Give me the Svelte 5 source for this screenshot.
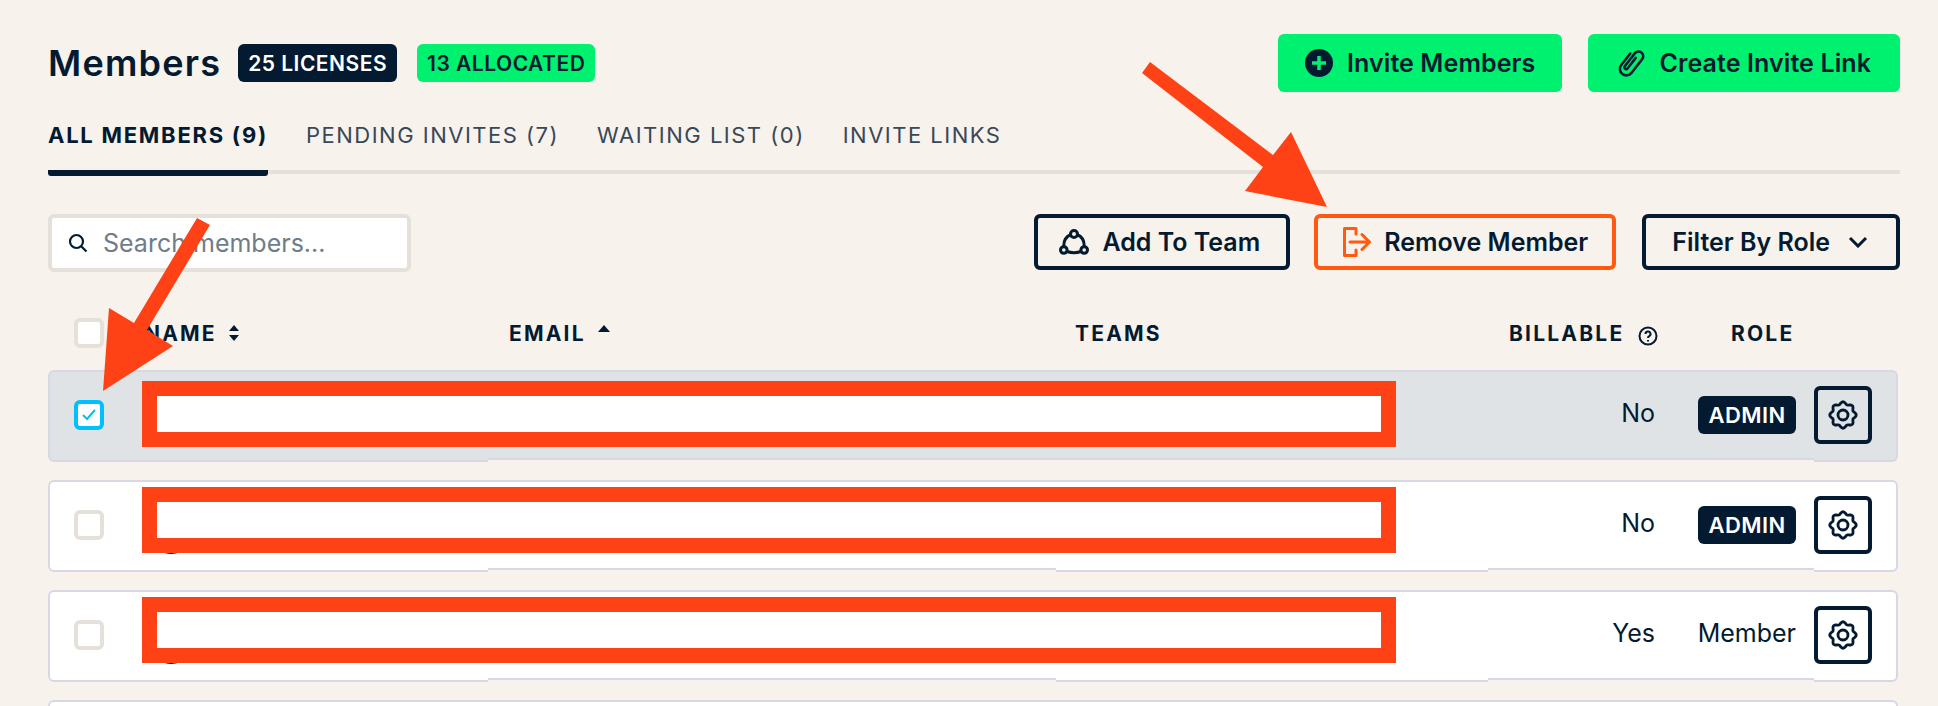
<script>
  const tabs = [
    { label: 'ALL MEMBERS (9)', active: true },
    { label: 'PENDING INVITES (7)' },
    { label: 'WAITING LIST (0)' },
    { label: 'INVITE LINKS' }
  ];

  const members = [
    { billable: 'No', role: 'ADMIN', checked: true },
    { billable: 'No', role: 'ADMIN' },
    { billable: 'Yes', role: 'Member' },
    { billable: '', role: '' }
  ];

  // wavy outline with eight bumps for the settings icon
  function gearPath() {
    const pts = [];
    for (let i = 0; i < 96; i++) {
      const a = (i / 96) * Math.PI * 2;
      const r = 12 + 1.2 * Math.cos(8 * a);
      pts.push(`${(15 + r * Math.cos(a)).toFixed(2)} ${(15 + r * Math.sin(a)).toFixed(2)}`);
    }
    return 'M' + pts.join('L') + 'Z';
  }
  const gear = gearPath();
</script>

<div class="page">
  <header class="top">
    <div class="title-wrap">
      <h1>Members</h1>
      <span class="badge dark">25 LICENSES</span>
      <span class="badge green">13 ALLOCATED</span>
    </div>
    <div class="top-actions">
      <button class="btn-green">
        <svg width="28" height="30" viewBox="0 0 28 30">
          <circle cx="14" cy="15" r="14" fill="#031a30" />
          <path d="M14 8v14M7 15h14" stroke="#00f170" stroke-width="3.5" />
        </svg>
        Invite Members
      </button>
      <button class="btn-green clip">
        <svg width="28" height="30" viewBox="2 3 24 24" fill="none" stroke="#031a30" stroke-width="2.200" stroke-linecap="round" stroke-linejoin="round">
          <g transform="rotate(38 14 15)">
            <path d="M8.500 9v12.500a5.500 5.500 0 0 0 11 0V6.500a4 4 0 0 0-8 0v14a1.500 1.500 0 0 0 3 0V9" />
          </g>
        </svg>
        Create Invite Link
      </button>
    </div>
  </header>

  <nav class="tabs">
    {#each tabs as tab}
      <span class="tab" class:active={tab.active}>{tab.label}</span>
    {/each}
  </nav>

  <div class="toolbar">
    <label class="search">
      <svg width="20" height="20" viewBox="0 0 20 20" fill="none" stroke="#031a30" stroke-width="2.200">
        <circle cx="8.500" cy="8.500" r="6.500" />
        <path d="m13.500 13.500 5 5" />
      </svg>
      <span>Search members...</span>
    </label>
    <div class="tools">
      <button class="btn-line team">
        <svg width="30" height="26" viewBox="0 0 30 26" fill="none" stroke="#031a30" stroke-width="3">
          <path d="M12 5.500C7 7.500 4.500 12 4.800 18M18 5.500c5 2 7.500 6.500 7.200 12.500M8 22.500c4.500 1.500 9.500 1.500 14 0" />
          <circle cx="15" cy="5" r="3.500" />
          <circle cx="4.800" cy="21" r="3.300" />
          <circle cx="25.200" cy="21" r="3.300" />
        </svg>
        Add To Team
      </button>
      <button class="btn-line remove">
        <svg width="28" height="30" viewBox="0 0 28 30" fill="none" stroke="#ff5a10" stroke-width="3" stroke-linejoin="round" stroke-linecap="round">
          <path d="M13 7V1.500H1.500v27H13V23" />
          <path d="M7 15h19M19 7.500l7.500 7.500-7.500 7.500" />
        </svg>
        Remove Member
      </button>
      <button class="btn-line filter">
        Filter By Role
        <svg width="20" height="12" viewBox="0 0 20 12" fill="none" stroke="#031a30" stroke-width="3">
          <path d="m2 2 8 8 8-8" />
        </svg>
      </button>
    </div>
  </div>

  <div class="thead">
    <span class="check"></span>
    <span class="th name">NAME
      <svg width="10" height="16" viewBox="0 0 10 16" fill="#031a30"><path d="M5 0l5 6H0zM5 16 0 10h10z" /></svg>
    </span>
    <span class="th email">EMAIL
      <svg class="caret" width="12" height="7" viewBox="0 0 12 7" fill="#031a30"><path d="M6 0l6 7H0z" /></svg>
    </span>
    <span class="th teams">TEAMS</span>
    <span class="th billable">BILLABLE
      <svg class="help" width="20" height="20" viewBox="0 0 20 20" fill="none" stroke="#031a30" stroke-width="2">
        <circle cx="10" cy="10" r="8.500" />
        <path d="M7.500 8a2.500 2.500 0 1 1 3.700 2.200c-.8.400-1.200.9-1.200 1.800" />
        <path d="M10 14v1.500" />
      </svg>
    </span>
    <span class="th role">ROLE</span>
  </div>

  <div class="rows">
    {#each members as m, i}
      <div class="row" class:selected={m.checked}>
        <div class="cell c-name">
          <span class="check" class:on={m.checked}>
            {#if m.checked}
              <svg width="16" height="14" viewBox="0 0 16 14" fill="none" stroke="#00bfff" stroke-width="2"><path d="m2 7 4 4 8-9" /></svg>
            {/if}
          </span>
          {#if i > 0}<span class="avatar"></span>{/if}
        </div>
        <div class="cell c-email"></div>
        <div class="cell c-teams" class:tall={i > 0}></div>
        <div class="cell c-billable"><span class="val">{m.billable}</span></div>
        <div class="cell c-role">
          {#if m.role === 'ADMIN'}
            <span class="admin">ADMIN</span>
          {:else}
            <span class="val">{m.role}</span>
          {/if}
        </div>
        <div class="cell c-gear">
          <button class="gear" aria-label="Settings">
            <svg width="30" height="30" viewBox="0 0 30 30" fill="none" stroke="#031a30" stroke-width="2.800">
              <path d={gear} />
              <circle cx="15" cy="15" r="5" />
            </svg>
          </button>
        </div>
        <span class="redact"></span>
      </div>
    {/each}
  </div>

  <svg class="arrows" width="1938" height="706" viewBox="0 0 1938 706" fill="#ff4216">
    <polygon points="1150,62 1273,155 1291,132 1327,207 1245,191 1263,167 1142,73" />
    <polygon points="197,218 210,225 147,330 173,346 103,391 109,308 134,323" />
  </svg>
</div>

<style>
  :global(body) {
    margin: 0;
    background: #f7f2eb;
    overflow: hidden;
  }

  .page {
    position: relative;
    width: 1938px;
    height: 706px;
    overflow: hidden;
    box-sizing: border-box;
    padding: 34px 38px 0 48px;
    font-family: Inter, "Noto Sans", sans-serif;
    color: #031a30;
  }

  button {
    font-family: inherit;
    color: inherit;
    cursor: pointer;
  }

  .top {
    display: flex;
    justify-content: space-between;
    height: 58px;
  }

  .title-wrap {
    display: flex;
    align-items: center;
    gap: 20px;
    height: 58px;
  }

  h1 {
    margin: 0 -3px 0 0;
    font-size: 36px;
    font-weight: 600;
    letter-spacing: 1.200px;
  }

  .badge {
    height: 38px;
    box-sizing: border-box;
    padding: 0 10px;
    display: flex;
    align-items: center;
    border-radius: 6px;
    font-size: 21px;
    font-weight: 600;
    letter-spacing: 0.5px;
    white-space: nowrap;
  }

  .dark {
    background: #031a30;
    color: #fff;
  }

  .green {
    background: #00f170;
  }

  .top-actions {
    display: flex;
    gap: 26px;
  }

  .btn-green {
    height: 58px;
    border: 0;
    border-radius: 6px;
    background: #00f170;
    display: flex;
    align-items: center;
    gap: 14px;
    padding: 0 27px;
    font-size: 25px;
    font-weight: 600;
    letter-spacing: 0.1px;
  }

  .btn-green.clip {
    padding: 0 29px;
  }

  .tabs {
    display: flex;
    gap: 38px;
    height: 50px;
    margin-top: 28px;
    border-bottom: 4px solid #e5e0d9;
  }

  .tab {
    font-size: 22px;
    letter-spacing: 1.500px;
    color: #37485a;
    line-height: 30px;
    height: 50px;
    white-space: nowrap;
  }

  .tab.active {
    font-weight: 700;
    letter-spacing: 1.750px;
    color: #031a30;
    border-bottom: 6px solid #031a30;
    border-radius: 0 0 3px 3px;
  }

  .toolbar {
    display: flex;
    justify-content: space-between;
    margin-top: 40px;
  }

  .search {
    width: 363px;
    height: 58px;
    box-sizing: border-box;
    border: 4px solid #e5e0d9;
    border-radius: 6px;
    background: #fff;
    display: flex;
    align-items: center;
    gap: 15px;
    padding-left: 16px;
    font-size: 25px;
    color: #6f7c89;
  }

  .tools {
    display: flex;
    gap: 24px;
  }

  .btn-line {
    height: 56px;
    box-sizing: border-box;
    border: 4px solid #031a30;
    border-radius: 6px;
    background: transparent;
    display: flex;
    align-items: center;
    gap: 13px;
    font-size: 25px;
    font-weight: 600;
    white-space: nowrap;
  }

  .team {
    padding: 0 26px 0 21px;
  }

  .remove {
    border-color: #ff5a10;
    padding: 0 24px 0 25px;
  }

  .filter {
    gap: 18px;
    margin-left: 2px;
    padding: 0 28px 0 26px;
  }

  .check {
    width: 30px;
    height: 30px;
    box-sizing: border-box;
    border: 4px solid #e5e0d9;
    border-radius: 6px;
    background: #fff;
    display: flex;
    align-items: center;
    justify-content: center;
    flex: none;
  }

  .check.on {
    border-color: #00bfff;
  }

  .thead {
    display: grid;
    grid-template-columns: 70px 365px 566px 434px 222px 1fr;
    align-items: center;
    height: 98px;
    padding: 24px 0 0 26px;
    box-sizing: border-box;
  }

  .th {
    font-size: 21px;
    font-weight: 700;
    letter-spacing: 2.200px;
    display: flex;
    align-items: center;
    gap: 12px;
  }

  .caret {
    margin-bottom: 10px;
  }

  .help {
    margin: 5px 0 0 2px;
  }

  .rows {
    display: flex;
    flex-direction: column;
    gap: 18px;
  }

  .row {
    position: relative;
    display: flex;
    align-items: flex-start;
    height: 92px;
    width: 1850px;
    border-radius: 6px;
    font-size: 25px;
  }

  .cell {
    box-sizing: border-box;
    background: #fff;
    border: solid #d8d8e4;
    border-width: 2px 0;
    height: 92px;
    display: flex;
    align-items: center;
  }

  .selected .cell {
    background: #dfe3e6;
  }

  .c-name {
    position: relative;
    width: 440px;
    padding: 0 0 2px 24px;
    border-left-width: 2px;
    border-radius: 6px 0 0 6px;
  }

  .c-email,
  .c-teams,
  .c-billable,
  .c-role {
    height: 90px;
  }

  .c-email {
    width: 568px;
  }

  .c-teams {
    width: 432px;
  }

  .c-teams.tall {
    height: 92px;
  }

  .c-billable {
    width: 167px;
    justify-content: flex-end;
  }

  .c-role {
    width: 159px;
    justify-content: flex-end;
    padding-right: 18px;
  }

  .val {
    padding-bottom: 4px;
  }

  .c-gear {
    flex: 1;
    padding-bottom: 2px;
    border-right-width: 2px;
    border-radius: 0 6px 6px 0;
  }

  .admin {
    background: #031a30;
    color: #fff;
    font-weight: 600;
    font-size: 22px;
    letter-spacing: 0.4px;
    height: 38px;
    width: 98px;
    box-sizing: border-box;
    display: flex;
    align-items: center;
    justify-content: center;
    border-radius: 6px;
  }

  .gear {
    width: 58px;
    height: 58px;
    box-sizing: border-box;
    border: 4px solid #031a30;
    border-radius: 6px;
    background: transparent;
    padding: 0;
    display: flex;
    align-items: center;
    justify-content: center;
  }

  .avatar {
    position: absolute;
    left: 98px;
    top: 26px;
    width: 46px;
    height: 46px;
    border-radius: 50%;
    background: #031a30;
  }

  /* annotations painted over the screenshot */
  .redact {
    position: absolute;
    left: 94px;
    top: 7px;
    width: 1254px;
    height: 66px;
    box-sizing: border-box;
    border: 15px solid #ff4216;
    background: #fff;
  }

  .selected .redact {
    top: 11px;
  }

  .row:last-child .redact {
    display: none;
  }

  .arrows {
    position: absolute;
    left: 0;
    top: 0;
    pointer-events: none;
  }
</style>
